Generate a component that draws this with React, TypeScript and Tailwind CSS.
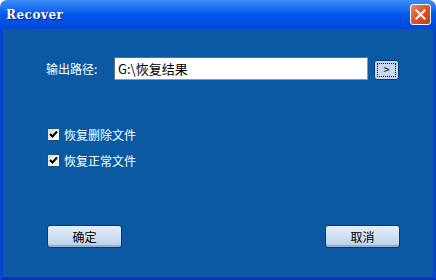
import React from "react";

const CheckBox = ({ label }: { label: string }) => (
  <label className="flex items-center h-[13px]">
    <span className="w-[13px] h-[13px] border border-[#1c5180] bg-gradient-to-br from-[#dcdcd7] to-white flex items-center justify-center">
      <svg width="9" height="9" viewBox="0 0 9 9">
        <path d="M1 4 L3.5 6.5 L8 1.5" stroke="#000" strokeWidth="2" fill="none" />
      </svg>
    </span>
    <span className="ml-[4px] text-white text-[12px] leading-none">{label}</span>
  </label>
);

const DlgButton = ({ children }: { children: React.ReactNode }) => (
  <button
    type="button"
    className="w-[75px] h-[23px] rounded-[3px] border border-[#003c74] bg-gradient-to-b from-[#e4eef8] via-[#cfe0f1] to-[#b9d0ea] text-black text-[12px] leading-none shadow-[inset_0_-2px_0_#8fb0d8]"
  >
    {children}
  </button>
);

export default function App() {
  return (
    <div
      className="w-[436px] h-[280px] flex flex-col select-none"
      style={{ fontFamily: '"Noto Sans CJK SC", "Noto Sans", sans-serif' }}
    >
      {/* title bar */}
      <div className="h-[29px] rounded-t-[7px] bg-gradient-to-b from-[#3d8df5] via-[#0058ee] to-[#0047d6] flex items-center justify-between pl-[6px] pr-[5px]">
        <span
          className="text-white text-[12px] font-bold tracking-[0.5px] [text-shadow:1px_1px_0_#0a1c78]"
          style={{ fontFamily: '"DejaVu Serif", serif' }}
        >
          Recover
        </span>
        <div className="w-[21px] h-[21px] rounded-[3px] border border-white bg-gradient-to-br from-[#e8866a] via-[#d9532c] to-[#c13d19] flex items-center justify-center">
          <svg width="11" height="11" viewBox="0 0 11 11">
            <path d="M1.5 1.5 L9.5 9.5 M9.5 1.5 L1.5 9.5" stroke="#fff" strokeWidth="2" strokeLinecap="square" />
          </svg>
        </div>
      </div>

      {/* body */}
      <div className="flex-1 bg-[#0a59a2] border-x-[3px] border-b-[3px] border-x-[#0844d0] border-b-[#0a33c4] flex flex-col pl-[43px]">
        <div className="flex items-center mt-[28px] h-[23px]">
          <span className="w-[68px] text-white text-[12px] leading-none">输出路径:</span>
          <div className="w-[254px] h-[23px] bg-white border border-[#7f9db9] border-t-[#5a6f8a] border-l-[#5a6f8a] flex items-center pl-[3px] text-[13px] text-black leading-none">
            G:\恢复结果
          </div>
          <button
            type="button"
            className="ml-[6px] mt-[2px] w-[25px] h-[20px] rounded-[3px] border border-[#003c74] bg-[#c5d8ef] p-[2px]"
          >
            <span className="flex w-full h-full items-center justify-center border border-dotted border-black text-[11px] leading-none text-black">
              &gt;
            </span>
          </button>
        </div>

        <div className="flex flex-col gap-[13px] mt-[48px] ml-[1px]">
          <CheckBox label="恢复删除文件" />
          <CheckBox label="恢复正常文件" />
        </div>

        <div className="flex mt-[58px] ml-[1px] gap-[203px]">
          <DlgButton>确定</DlgButton>
          <DlgButton>取消</DlgButton>
        </div>
      </div>
    </div>
  );
}
